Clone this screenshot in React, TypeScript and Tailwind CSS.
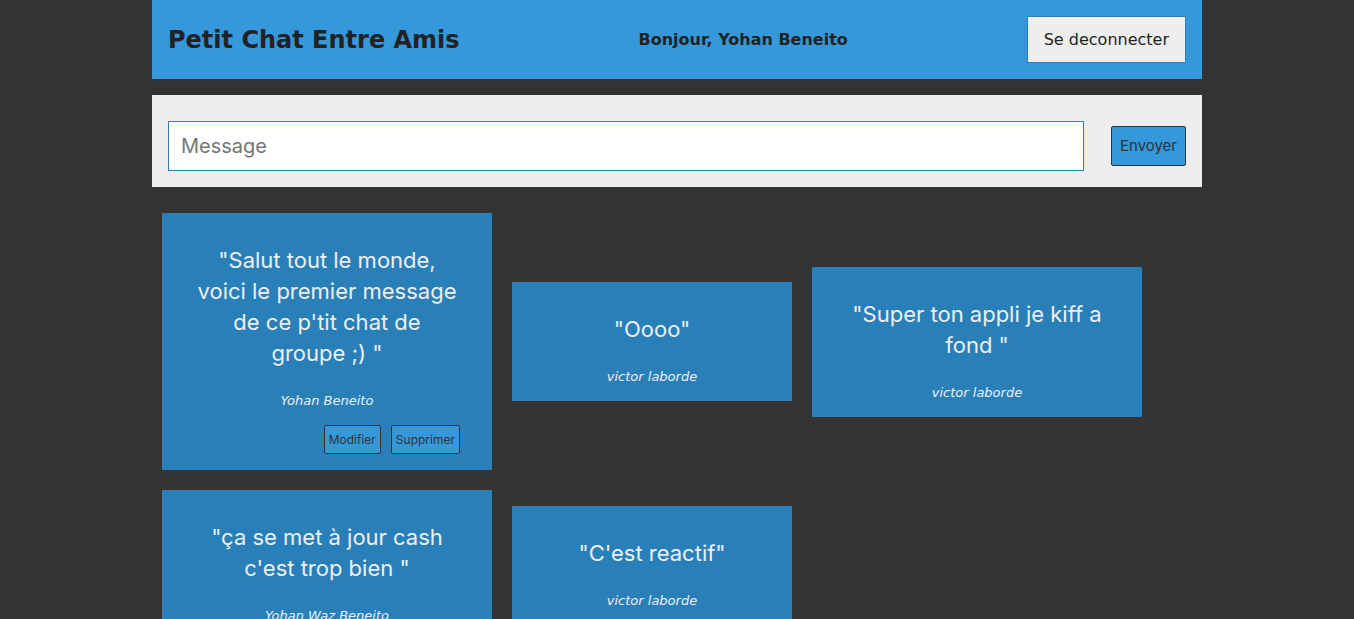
import { useState } from "react";

type Message = { id: number; text: string; author: string; mine?: boolean };

const messages: Message[] = [
  { id: 1, text: "Salut tout le monde, voici le premier message de ce p'tit chat de groupe ;) ", author: "Yohan Beneito", mine: true },
  { id: 2, text: "Oooo", author: "victor laborde" },
  { id: 3, text: "Super ton appli je kiff a fond ", author: "victor laborde" },
  { id: 4, text: "ça se met à jour cash c'est trop bien ", author: "Yohan Waz Beneito" },
  { id: 5, text: "C'est reactif", author: "victor laborde" },
];

function Header() {
  return (
    <header className="flex items-center justify-between bg-[#3498db] p-4 font-['DejaVu_Sans',sans-serif] text-[#222]">
      <h1 className="text-2xl font-bold">Petit Chat Entre Amis</h1>
      <p className="font-bold">Bonjour, Yohan Beneito</p>
      <button type="button" className="border border-[#2980b9] bg-[#eee] px-4 py-3 leading-[21px]">
        Se deconnecter
      </button>
    </header>
  );
}

function MessageForm() {
  const [value, setValue] = useState("");
  return (
    <form
      className="mt-4 flex items-center gap-[27px] bg-[#eee] px-4 pt-[26px] pb-4"
      onSubmit={(e) => e.preventDefault()}
    >
      <input
        type="text"
        aria-label="Message"
        placeholder="Message"
        value={value}
        onChange={(e) => setValue(e.target.value)}
        className="h-[50px] min-w-0 flex-1 border border-[#2980b9] bg-white px-3 text-xl text-[#222] placeholder:text-[#757575]"
      />
      <button type="submit" className="rounded-xs border border-[#333] bg-[#3498db] px-2 py-2 text-[15px] leading-[22px] text-[#333]">
        Envoyer
      </button>
    </form>
  );
}

function MessageCard({ message }: { message: Message }) {
  return (
    <li className="m-[10px] max-w-[330px] min-w-[280px] bg-[#2980b9] px-8 pt-8 pb-4 text-center text-[#eee]">
      <p className="text-[22px] leading-[31px]">{`"${message.text}"`}</p>
      <p className="mt-6 font-['DejaVu_Sans',sans-serif] text-[13px] leading-4 italic">{message.author}</p>
      {message.mine && (
        <div className="mt-4 flex justify-end gap-[10px]">
          {["Modifier", "Supprimer"].map((label) => (
            <button
              key={label}
              type="button"
              className="rounded-xs border border-[#333] bg-[#3498db] px-1 py-[5px] text-xs leading-[17px] text-[#333]"
            >
              {label}
            </button>
          ))}
        </div>
      )}
    </li>
  );
}

export default function App() {
  return (
    <div className="min-h-screen bg-[#333] font-[Inter,sans-serif]">
      <main className="mx-auto max-w-[1050px]">
        <Header />
        <MessageForm />
        <ul className="mt-4 flex flex-wrap items-center">
          {messages.map((m) => (
            <MessageCard key={m.id} message={m} />
          ))}
        </ul>
      </main>
    </div>
  );
}
